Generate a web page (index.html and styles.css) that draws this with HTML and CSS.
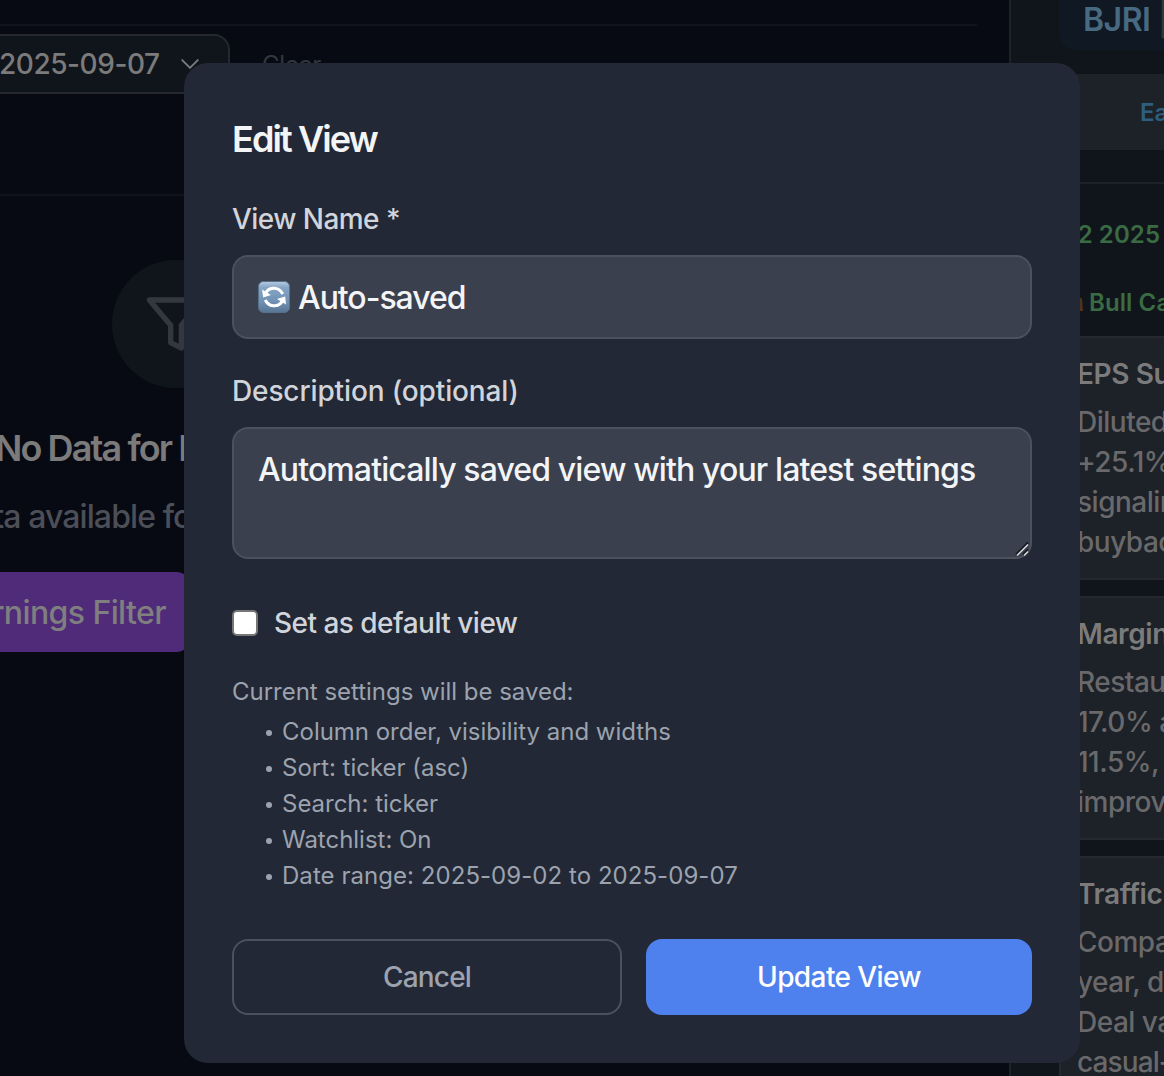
FILE: index.html
```
<!DOCTYPE html>
<html lang="en">
<head>
<meta charset="utf-8">
<title>Edit View</title>
<link rel="stylesheet" href="styles.css">
</head>
<body>
<div class="app">
  <main class="main">
    <div class="topline"></div>
    <div class="filters">
      <div class="date-select"><span>2025-09-07</span>
        <svg class="chevron" viewBox="0 0 16 9" fill="none" stroke="currentColor" stroke-width="1.700" stroke-linecap="round" stroke-linejoin="round"><path d="M1 1l7 7 7-7"/></svg>
      </div>
      <span class="clear">Clear</span>
    </div>
    <div class="empty">
      <div class="empty-icon">
        <svg viewBox="0 0 24 24" fill="none" stroke="currentColor" stroke-width="2" stroke-linecap="round" stroke-linejoin="round"><polygon points="22 3 2 3 10 12.46 10 19 14 21 14 12.46 22 3"/></svg>
      </div>
      <h2 class="empty-title">No Data for Earnings</h2>
      <p class="empty-text"><span>No data available for</span></p>
      <div class="empty-button"><span>Clear Earnings Filter</span></div>
    </div>
  </main>
  <aside class="side">
    <div class="ticker">BJRI <span class="bar">|</span></div>
    <div class="tabs">Earnings</div>
    <div class="section">
      <div class="quarter">Q2 2025</div>
      <div class="bull">
        <svg class="ox" viewBox="0 0 24 24"><path d="M1 12q2-5 10-4 9-4 12 0l1 12h-3l-1-4H8l-1 4H4l-1-6z" fill="#50331f"/></svg>
        <span>Bull Case</span>
      </div>
    </div>
    <div class="cards">
      <article class="card"><h3>EPS Surge</h3><p>Diluted EPS<br>+25.1% YoY<br>signaling<br>buybacks</p></article>
      <article class="card"><h3>Margins</h3><p>Restaurant<br>17.0% and<br>11.5%, up<br>improving</p></article>
      <article class="card"><h3>Traffic</h3><p>Comparable<br>year, driven<br>Deal value<br><span class="tight">casual-dining</span></p></article>
    </div>
  </aside>
</div>
<div class="overlay">
  <form class="modal">
    <h1 class="title">Edit View</h1>
    <label class="label label-name" for="name">View Name *</label>
    <div class="field">
      <svg class="sync" viewBox="0 0 32 32">
        <defs><linearGradient id="sync-bg" x1="0" y1="0" x2="0" y2="1"><stop offset="0" stop-color="#b7cbe0"/><stop offset=".2" stop-color="#86a4c5"/><stop offset=".65" stop-color="#7192b4"/><stop offset="1" stop-color="#587492"/></linearGradient></defs>
        <rect x=".5" y=".5" width="31" height="31" rx="5" fill="url(#sync-bg)" stroke="#58718b"/>
        <g fill="none" stroke="#fff" stroke-width="3"><path d="M7.2 13.500C9.500 5.700 20.500 4.800 24.800 13"/><path d="M24.800 18.500C22.500 26.300 11.500 27.200 7.200 19"/></g>
        <path d="M4 8.500l1.200 8 7.800-2.500z M28 23.500l-.8-8-8.200 2.500z" fill="#fff"/>
      </svg>
      <input class="input" id="name" type="text" value="Auto-saved">
    </div>
    <label class="label" for="desc">Description (optional)</label>
    <div class="area-wrap">
      <textarea class="area" id="desc">Automatically saved view with your latest settings</textarea>
      <svg class="grip" viewBox="0 0 16 16" fill="none"><path d="M2 13.500L14 1.500M9 13.500l5-5" stroke="#15191f" stroke-width="2"/><path d="M3 14.500L14 3.500M10 14.500l4-4" stroke="#d4d6da" stroke-width="1.600"/></svg>
    </div>
    <label class="check"><input type="checkbox" class="box"><span>Set as default view</span></label>
    <div class="summary">
      <p>Current settings will be saved:</p>
      <ul>
        <li>Column order, visibility and widths</li>
        <li>Sort: ticker (asc)</li>
        <li>Search: ticker</li>
        <li>Watchlist: On</li>
        <li class="range">Date range: 2025-09-02 to 2025-09-07</li>
      </ul>
    </div>
    <div class="actions">
      <button type="button" class="btn cancel">Cancel</button>
      <button type="button" class="btn update">Update View</button>
    </div>
  </form>
</div>
</body>
</html>
```
FILE: styles.css
```
* { box-sizing: border-box; }
body { margin: 0; width: 1164px; height: 1076px; overflow: hidden; position: relative; background: #070a12; font-family: Inter, "Liberation Sans", sans-serif; }
h1, h2, h3, p, ul { margin: 0; padding: 0; }

.app { display: flex; width: 1164px; height: 1076px; overflow: hidden; }
.main { width: 1009px; flex: none; overflow: hidden; }
.topline { width: 977px; height: 26px; border-bottom: 2px solid #10131b; }
.filters { display: flex; align-items: center; height: 170px; padding: 8px 0 100px; border-bottom: 2px solid #10131b; }
.date-select { width: 230px; height: 60px; flex: none; display: flex; align-items: center; justify-content: space-between; padding-right: 29px; border: 2px solid #25282f; border-left: 0; border-radius: 0 16px 16px 0; background: #10151b; color: #7b7b7b; font-size: 28px; font-weight: 500; letter-spacing: -.45px; white-space: nowrap; }
.date-select span { margin-left: -1px; }
.chevron { width: 18px; height: 10px; }
.clear { margin-left: 32px; color: #34373e; font-size: 24px; font-weight: 400; letter-spacing: -.2px; }
.empty { width: 352px; padding-top: 64px; white-space: nowrap; }
.empty-icon { width: 128px; height: 128px; margin: 0 auto; display: grid; place-items: center; border-radius: 50%; background: #10151b; color: #34373d; }
.empty-icon svg { width: 64px; height: 64px; }
.empty-title { margin: 32px 0 0 -5px; height: 56px; color: #7b7b7b; font-size: 36px; line-height: 56px; font-weight: 600; letter-spacing: -1.9px; }
.empty-text { width: 203px; margin-top: 20px; display: flex; justify-content: flex-end; color: #4c4f57; font-size: 32px; line-height: 42px; font-weight: 500; letter-spacing: -.9px; }
.empty-button { width: 192px; height: 80px; margin-top: 34px; padding-right: 26px; display: flex; align-items: center; justify-content: flex-end; border-radius: 0 16px 16px 0; background: #502b7a; color: #7f7f7f; font-size: 32px; font-weight: 500; letter-spacing: -.6px; }

.side { width: 155px; height: 1076px; flex: none; overflow: hidden; padding-left: 48px; border-left: 2px solid #1d2129; background: #10151b; white-space: nowrap; }
.ticker { width: 300px; height: 50px; padding: 0 24px 12px; display: flex; align-items: center; gap: 7px; border-radius: 0 0 0 16px; background: #101824; color: #486a81; font-size: 32px; font-weight: 600; letter-spacing: -.5px; }
.bar { color: #34373d; font-weight: 400; }
.tabs { width: 300px; height: 76px; margin-top: 24px; padding-left: 81px; border-radius: 16px; background: #1d2128; color: #2e5f80; font-size: 24px; line-height: 77px; font-weight: 600; }
.section { width: 300px; height: 154px; margin-top: 32px; padding-top: 35px; border-top: 2px solid #1d2129; color: #3a6b43; font-size: 24px; line-height: 32px; font-weight: 600; letter-spacing: .1px; }
.bull { display: flex; align-items: center; gap: 6px; margin-top: 36px; }
.ox { width: 24px; height: 24px; }
.cards { width: 300px; display: grid; gap: 16px; }
.card { height: 244px; padding: 16px; border: 2px solid #25282f; background: #1d2128; color: #69696b; font-size: 28px; line-height: 40px; font-weight: 500; letter-spacing: -.5px; }
.card h3 { margin-bottom: 8px; color: #7b7b7b; font-size: 28px; line-height: 40px; font-weight: 600; letter-spacing: -.4px; }
.tight { letter-spacing: -.9px; }

.overlay { position: absolute; inset: 0; display: flex; align-items: flex-start; padding: 63px 84px 13px 184px; }
.modal { width: 896px; height: 1000px; padding: 48px; border-radius: 24px; background: #222835; }
.title { margin-bottom: 32px; color: #f3f4f6; font-size: 36px; line-height: 56px; font-weight: 600; letter-spacing: -1.9px; }
.label { display: block; margin-bottom: 16px; color: #d1d5db; font-size: 28px; line-height: 40px; font-weight: 500; letter-spacing: -.12px; }
.label-name { letter-spacing: -.55px; }
.field { height: 84px; margin-bottom: 32px; padding: 2px 24px 0; display: flex; align-items: center; gap: 8px; border: 2px solid #4c515e; border-radius: 16px; background: #3b404f; }
.sync { width: 32px; height: 32px; flex: none; margin-top: -2px; }
.input { min-width: 0; flex: 1; padding: 0; border: 0; outline: 0; background: transparent; color: #f3f4f6; font: 500 32px/48px Inter, sans-serif; letter-spacing: -1.05px; }
.area-wrap { position: relative; height: 132px; margin-bottom: 44px; }
.area { display: block; width: 100%; height: 132px; padding: 17px 24px 15px; border: 2px solid #4c515e; border-radius: 16px; outline: 0; resize: none; overflow: hidden; background: #3b404f; color: #f3f4f6; font: 500 32px/48px Inter, sans-serif; letter-spacing: -.88px; }
.grip { position: absolute; right: 2px; bottom: 2px; width: 16px; height: 16px; }
.check { height: 40px; display: flex; align-items: center; gap: 16px; color: #d1d5db; font-size: 28px; font-weight: 500; letter-spacing: -.52px; }
.box { appearance: none; width: 26px; height: 26px; margin: 0; border: 2px solid #767676; border-radius: 5px; background: #fff; }
.summary { margin: 33px 0 47px; color: #9ca3af; font-size: 24px; line-height: 32px; letter-spacing: -.02px; }
.summary ul { display: grid; gap: 4px; margin-top: 8px; padding-left: 34px; list-style: none; }
.summary li { display: flex; align-items: center; gap: 10px; }
.summary li::before { content: ""; width: 6px; height: 6px; margin-top: 2px; border-radius: 50%; background: #9ca3af; }
.summary .range { letter-spacing: .05px; }
.actions { display: flex; gap: 24px; }
.btn { height: 76px; padding: 0; border: 0; border-radius: 16px; font: 500 28px/40px Inter, sans-serif; letter-spacing: -.6px; }
.cancel { width: 390px; border: 2px solid #4c515e; background: transparent; color: #9ca3af; letter-spacing: -.8px; }
.update { width: 386px; background: #4f81ee; color: #fff; }
```
